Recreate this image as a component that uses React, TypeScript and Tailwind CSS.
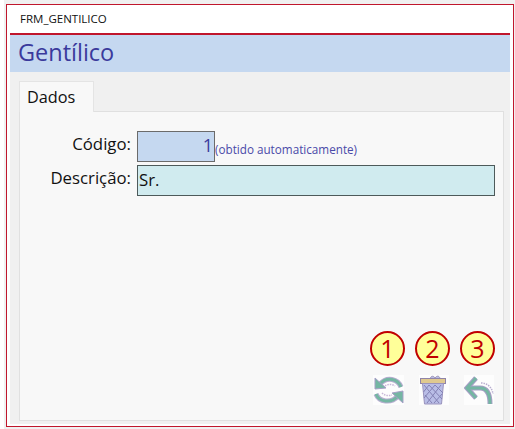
const font = "font-['Open_Sans','Noto_Sans',sans-serif]";

function Badge({ n }: { n: string }) {
  return (
    <div className="flex h-[35px] w-[35px] items-center justify-center rounded-full border-2 border-[#c00000] bg-[#ffff99] text-[25px] leading-none text-[#c00000]">
      {n}
    </div>
  );
}

function RefreshIcon() {
  const top = "M28 12 C25 4 14 1 7 9";
  const bottom = "M3 19 C6 27 18 29 25 21";
  return (
    <svg width="31" height="30" viewBox="0 0 31 30" fill="none">
      <rect width="31" height="30" fill="#fdfdfd" />
      <path d={top} stroke="#b7aed0" strokeWidth="5" />
      <path d={bottom} stroke="#b7aed0" strokeWidth="5" />
      <path d={top} stroke="#74b6a3" strokeWidth="3" />
      <path d={bottom} stroke="#74b6a3" strokeWidth="3" />
      <path d="M2 3 L2 14 L13 13 Z" fill="#74b6a3" stroke="#a79fc6" strokeWidth="1" />
      <path d="M30 16 L30 28 L19 18 Z" fill="#74b6a3" stroke="#a79fc6" strokeWidth="1" />
      <path d="M12 11 C15 9 19 9 22 11" stroke="#c9b7d8" strokeWidth="1.5" strokeDasharray="1.5 1" />
      <path d="M9 18 C12 21 16 21 19 20" stroke="#c9b7d8" strokeWidth="1.5" strokeDasharray="1.5 1" />
    </svg>
  );
}

function TrashIcon() {
  return (
    <svg width="30" height="30" viewBox="0 0 30 30" fill="none">
      <rect width="30" height="30" fill="#fdfdfd" />
      <path d="M11 4 C12 0 15 1 16 3 C18 0 21 1 21 4" fill="#b9bde6" stroke="#9c93b5" strokeWidth="1" />
      <rect x="1.5" y="3.5" width="25" height="5" fill="#e0c98f" stroke="#9084a8" />
      <path d="M3.5 8.5 L24.5 8.5 L22.5 29 L5.5 29 Z" fill="#b9bde6" stroke="#9a93bd" />
      <path d="M5 10 L20 28 M10 10 L23 24 M16 10 L24 18 M22 10 L8 28 M16 10 L5 23 M10 10 L4.5 17 M6 20 L13 28 M15 28 L23 19" stroke="#8482b5" strokeWidth="1" />
    </svg>
  );
}

function BackIcon() {
  const shaft = "M4 13 L16 13 C23 13 26 19 26 29";
  return (
    <svg width="30" height="30" viewBox="0 0 30 30" fill="none">
      <rect width="30" height="30" fill="#fdfdfd" />
      <path d="M12 3 L3 13 L12 23" stroke="#a79fc6" strokeWidth="5" />
      <path d={shaft} stroke="#a79fc6" strokeWidth="5" />
      <path d="M12 3 L3 13 L12 23" stroke="#74b6a3" strokeWidth="3" />
      <path d={shaft} stroke="#74b6a3" strokeWidth="3" />
      <path d="M17 8 C23 8 28 12 29 19" stroke="#b9aed0" strokeWidth="1.5" strokeDasharray="1.5 1" />
    </svg>
  );
}

export default function App() {
  return (
    <div className={`${font} flex h-[429px] w-[515px] overflow-hidden bg-white pl-[4px]`}>
      <div className="flex min-w-0 flex-1 flex-col bg-[#f0f0f0] pb-[2px] pl-[2px] pr-[1px] pt-[4px]">
        <div className="flex min-h-0 flex-1 flex-col border border-[#c0162c] bg-white px-[3px] pb-[2px]">
          <div className="flex h-[30px] shrink-0 items-center border-b-2 border-[#c0162c] pl-[10px] text-[11.5px] text-[#111]">
            FRM_GENTILICO
          </div>
          <div className="flex h-[37px] shrink-0 items-center bg-[#c5d8f0] pb-[2px] pl-[8px] text-[23.5px] text-[#3a3a9c]">
            Gentílico
          </div>
          <div className="flex min-h-0 flex-1 flex-col bg-[#f0f0f0] pb-[3px] pl-[9px] pr-[6px] pt-[9px]">
            <div className="relative z-10 -mb-px flex h-[31px] w-[75px] items-center border border-b-0 border-[#e4e4e4] bg-[#f8f8f8] pl-[7px] text-[16.3px] text-[#111]">
              Dados
            </div>
            <div className="flex min-h-0 flex-1 flex-col border border-[#e0e0e0] bg-[#f8f8f8]">
              <div className="flex flex-col gap-[3px] pt-[19px]">
                <div className="flex items-stretch">
                  <div className="w-[117px] pr-[6px] pt-[1px] text-right text-[16.8px] leading-[24px] text-[#111]">Código:</div>
                  <div className="flex h-[31px] w-[78px] justify-end border border-[#6b6b6b] bg-[#c5d8f0] pr-[1px] pt-[1px] text-[18px] leading-[24px] text-[#3a3a9c]">1</div>
                  <div className="self-end pb-[5px] text-[11.7px] leading-[16px] text-[#4a4aa8]">(obtido automaticamente)</div>
                </div>
                <div className="flex items-stretch">
                  <div className="w-[117px] pr-[6px] pt-[1px] text-right text-[16.8px] leading-[24px] text-[#111]">Descrição:</div>
                  <div className="h-[31px] w-[358px] border border-[#4d5a5a] bg-[#d0ebef] pl-[1px] pt-[2px] text-[16.8px] leading-[24px] text-[#111]">Sr.</div>
                </div>
              </div>
              <div className="mt-auto flex flex-col items-end pb-[15px] pr-[9px]">
                <div className="-mr-px flex gap-[10px]">
                  <Badge n="1" />
                  <Badge n="2" />
                  <Badge n="3" />
                </div>
                <div className="mt-[9px] flex gap-[15px]">
                  <RefreshIcon />
                  <TrashIcon />
                  <BackIcon />
                </div>
              </div>
            </div>
          </div>
        </div>
      </div>
    </div>
  );
}
